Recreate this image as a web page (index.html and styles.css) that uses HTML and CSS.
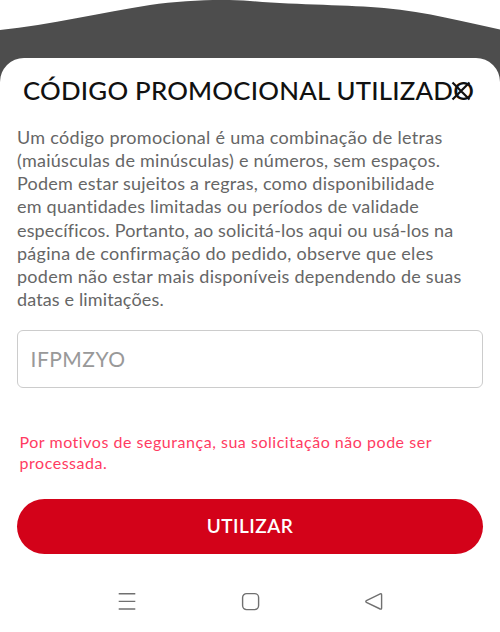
FILE: index.html
```
<!DOCTYPE html>
<html lang="pt">
<head>
<meta charset="utf-8">
<title>Código promocional</title>
<link rel="stylesheet" href="styles.css">
</head>
<body>
<svg class="backdrop" viewBox="0 0 500 100" aria-hidden="true">
  <path fill="#4d4d4d" d="M0 30C50 25 103 12 150 5C184 0 224 -1 250 1C295 5 350 5 384 8C428 12 464 22 500 29.5V100H0Z"/>
</svg>
<main class="sheet">
  <header class="head">
    <h1>CÓDIGO PROMOCIONAL UTILIZADO</h1>
    <button class="close" aria-label="Fechar"><svg viewBox="0 0 20 20"><path d="M1.5 1.5L18.5 18.5M18.5 1.5L1.5 18.5"/></svg></button>
  </header>
  <p class="info">
    <span class="l1">Um código promocional é uma combinação de letras</span>
    <span class="l2">(maiúsculas de minúsculas) e números, sem espaços.</span>
    <span class="l3">Podem estar sujeitos a regras, como disponibilidade</span>
    <span class="l4">em quantidades limitadas ou períodos de validade</span>
    <span class="l5">específicos. Portanto, ao solicitá-los aqui ou usá-los na</span>
    <span class="l6">página de confirmação do pedido, observe que eles</span>
    <span class="l7">podem não estar mais disponíveis dependendo de suas</span>
    <span class="l8">datas e limitações.</span>
  </p>
  <div class="field">IFPMZYO</div>
  <p class="error">Por motivos de segurança, sua solicitação não pode ser<br>processada.</p>
  <button class="submit">UTILIZAR</button>
  <nav class="navbar">
    <svg viewBox="0 0 20 22"><path d="M1.7 3.8H18.3M1.7 11.4H18.3M1.7 19H18.3"/></svg>
    <svg viewBox="0 0 20 22"><rect x="2.6" y="3.6" width="16" height="16" rx="4"/></svg>
    <svg viewBox="0 0 20 22"><path d="M2.4 10.7L16.2 3.9Q17.6 3.4 17.6 4.9V18.1Q17.6 19.6 16.2 19L2.4 12.3Q1.2 11.5 2.4 10.7Z"/></svg>
  </nav>
</main>
</body>
</html>
```
FILE: styles.css
```
* { box-sizing: border-box; }

body {
  margin: 0;
  height: 632px;
  overflow: hidden;
  background: #fff;
  font-family: Lato, "Liberation Sans", sans-serif;
}

.backdrop {
  display: block;
  width: 500px;
  height: 100px;
}

.sheet {
  position: relative;
  margin-top: -42.5px;
  height: 575px;
  padding: 17px 17px 0;
  border-radius: 24px 24px 0 0;
  background: #fff;
}

.head {
  position: relative;
  height: 30px;
}

h1 {
  margin: 0 0 0 6px;
  font-size: 25.8px;
  font-weight: 500;
  line-height: 30px;
  letter-spacing: 0.22px;
  color: #111;
  white-space: nowrap;
}

.close {
  position: absolute;
  top: 6.5px;
  right: 12px;
  width: 20px;
  height: 20px;
  padding: 0;
  border: 0;
  background: none;
}

.close svg {
  display: block;
  fill: none;
  stroke: #111;
  stroke-width: 2.2;
}

.info {
  margin: 21.7px 0 0;
  font-size: 18px;
  line-height: 23.1px;
  color: #666;
}

.info span {
  display: block;
  white-space: nowrap;
}

.l1 { letter-spacing: 0.3px; }
.l2 { letter-spacing: 0.27px; }
.l3 { letter-spacing: 0.24px; }
.l4 { letter-spacing: 0.22px; }
.l5 { letter-spacing: 0.15px; }
.l6 { letter-spacing: 0.28px; }
.l7 { letter-spacing: 0.25px; }
.l8 { letter-spacing: 0.14px; }

.field {
  height: 58px;
  margin-top: 19px;
  padding-left: 12.5px;
  border: 1.5px solid #ccc;
  border-radius: 6px;
  font-size: 21px;
  line-height: 55px;
  letter-spacing: 0.5px;
  color: #999;
}

.error {
  margin: 42.6px 0 0 2.5px;
  font-size: 16px;
  line-height: 21.5px;
  letter-spacing: 0.53px;
  color: #ff3b62;
  white-space: nowrap;
}

.submit {
  display: block;
  width: 466px;
  height: 55.5px;
  margin-top: 25.2px;
  padding: 0 0 1.5px;
  border: 0;
  border-radius: 28px;
  background: #d30219;
  color: #fff;
  font: 600 19px/54px Lato, sans-serif;
  letter-spacing: 0.5px;
}

.navbar {
  display: flex;
  justify-content: space-between;
  margin: 35.6px 99.5px 0 100px;
}

.navbar svg {
  width: 20px;
  height: 22px;
  fill: none;
  stroke: #707070;
  stroke-width: 1.4;
}
```
